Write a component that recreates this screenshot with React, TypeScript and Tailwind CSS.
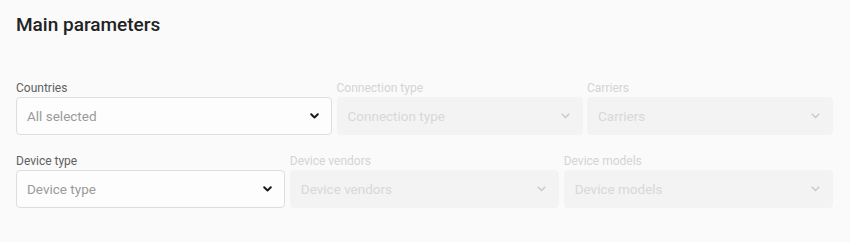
const row1 = [
  { label: 'Countries', value: 'All selected', disabled: false },
  { label: 'Connection type', value: 'Connection type', disabled: true },
  { label: 'Carriers', value: 'Carriers', disabled: true },
];

const row2 = [
  { label: 'Device type', value: 'Device type', disabled: false },
  { label: 'Device vendors', value: 'Device vendors', disabled: true },
  { label: 'Device models', value: 'Device models', disabled: true },
];

function Chevron({ disabled }: { disabled: boolean }) {
  return (
    <svg width="9" height="6" viewBox="0 0 9 6" className="shrink-0">
      <path
        d="M1.2 1.2 L4.5 4.5 L7.8 1.2"
        fill="none"
        stroke={disabled ? '#cccccc' : '#1a1a1a'}
        strokeWidth={disabled ? 1.6 : 2}
        strokeLinecap="round"
        strokeLinejoin="round"
      />
    </svg>
  );
}

function Field({ label, value, disabled }: { label: string; value: string; disabled: boolean }) {
  return (
    <div className="flex flex-col">
      <span className={`text-xs leading-4 mb-[1.5px] ${disabled ? 'text-[#d4d4d4]' : 'text-[#616161]'}`}>{label}</span>
      <div
        className={`h-[38px] rounded-[4px] border flex items-center justify-between pl-[10px] pr-[12px] ${
          disabled ? 'bg-[#f3f3f3] border-[#f3f3f3]' : 'bg-[#fdfdfd] border-[#dedede]'
        }`}
      >
        <span className={`text-[13.5px] ${disabled ? 'text-[#d8d8d8]' : 'text-[#9a9a9a]'}`}>{value}</span>
        <Chevron disabled={disabled} />
      </div>
    </div>
  );
}

export default function App() {
  return (
    <div className="h-[242px] w-[850px] bg-[#fafafa] pl-4 pr-[17px] pt-3" style={{ fontFamily: 'Roboto, "Noto Sans", sans-serif' }}>
      <h2 className="text-[19px] leading-6 font-medium text-[#222222] pt-[1px]">Main parameters</h2>

      <div className="mt-[42.5px] grid grid-cols-[316px_1fr_1fr] gap-x-[4.5px]">
        {row1.map((f) => (
          <Field key={f.label} {...f} />
        ))}
      </div>

      <div className="mt-[17.5px] grid grid-cols-3 gap-x-[4.5px]">
        {row2.map((f) => (
          <Field key={f.label} {...f} />
        ))}
      </div>
    </div>
  );
}
